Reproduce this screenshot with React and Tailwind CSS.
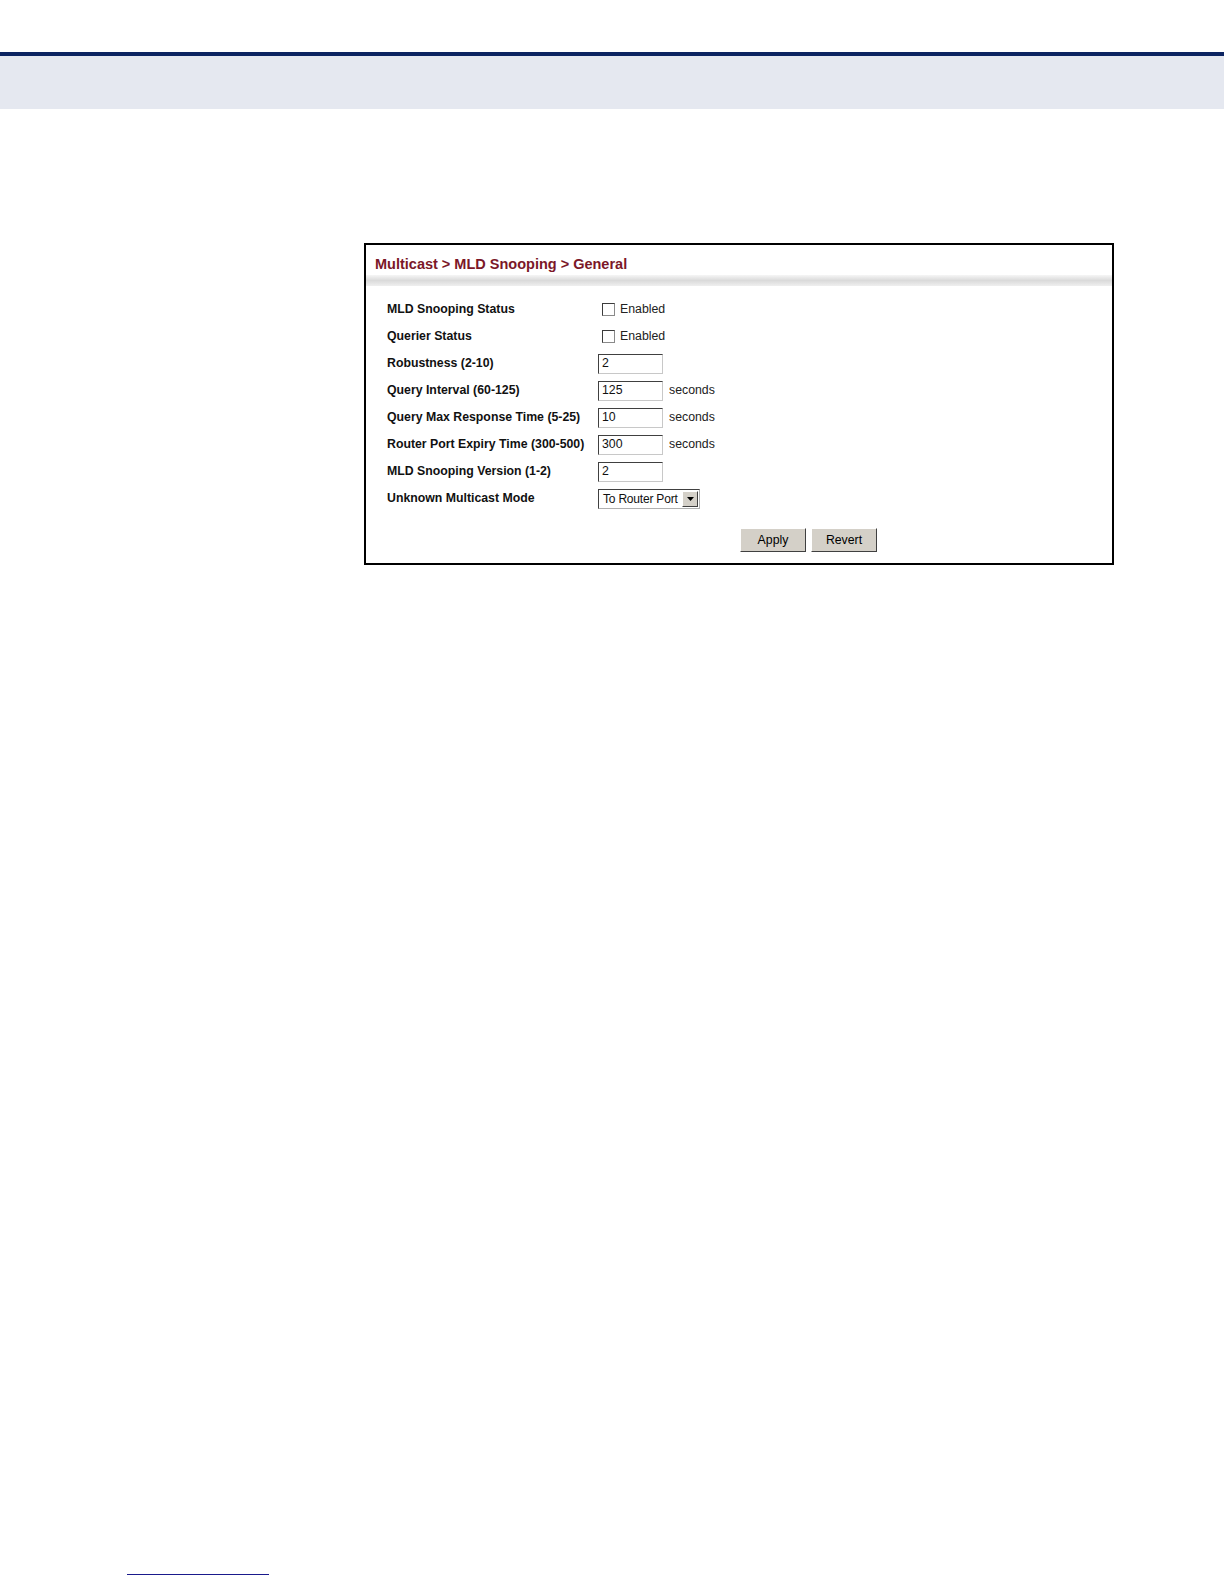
import React from 'react';

const ROWS = [
  { label: 'MLD Snooping Status', kind: 'check' },
  { label: 'Querier Status', kind: 'check' },
  { label: 'Robustness (2-10)', kind: 'input', value: '2' },
  { label: 'Query Interval (60-125)', kind: 'input', value: '125', unit: 'seconds' },
  { label: 'Query Max Response Time (5-25)', kind: 'input', value: '10', unit: 'seconds' },
  { label: 'Router Port Expiry Time (300-500)', kind: 'input', value: '300', unit: 'seconds' },
  { label: 'MLD Snooping Version (1-2)', kind: 'input', value: '2' },
  { label: 'Unknown Multicast Mode', kind: 'select', value: 'To Router Port' },
];

function Field({ row }) {
  if (row.kind === 'check') {
    return (
      <div className="flex items-center gap-[5px] pl-1">
        <span className="w-[13px] h-[13px] bg-white border border-[#8a8a8a] border-t-[#3c3c3c] border-l-[#3c3c3c]" />
        <span className="text-[12.3px] text-[#222]">Enabled</span>
      </div>
    );
  }
  if (row.kind === 'select') {
    return (
      <div className="flex items-center w-[102px] h-[20px] bg-white border border-[#b0b0b0] border-t-[#404040] border-l-[#404040]">
        <span className="flex-1 min-w-0 pl-[4px] whitespace-nowrap overflow-hidden text-[12px] tracking-[-0.2px] text-[#111] leading-none">{row.value}</span>
        <span className="w-[16px] h-[16px] shrink-0 mr-[1px] flex items-center justify-center bg-[#d4d0c8] border border-white border-r-[#404040] border-b-[#404040]">
          <svg width="7" height="4" viewBox="0 0 7 4"><path d="M0 0h7L3.5 4z" fill="#000" /></svg>
        </span>
      </div>
    );
  }
  return (
    <div className="flex items-center gap-[6px]">
      <div className="w-[65px] h-[20px] flex items-center pl-[3px] bg-white border border-[#c8c8c8] border-t-[#404040] border-l-[#404040] text-[12.3px] text-[#111]">
        {row.value}
      </div>
      {row.unit && <span className="text-[12.3px] text-[#222]">{row.unit}</span>}
    </div>
  );
}

export default function App() {
  return (
    <div className="w-[1224px] h-[1584px] bg-white flex flex-col" style={{ fontFamily: '"Liberation Sans", Arial, sans-serif' }}>
      <div className="h-[52px] shrink-0" />
      <div className="h-[4px] shrink-0 bg-[#0c2461]" />
      <div className="h-[53px] shrink-0 bg-[#e5e8f0]" />

      <div className="mt-[134px] ml-[364px] w-[750px] h-[322px] shrink-0 border-2 border-black flex flex-col">
        <div className="pt-[10px] pl-[9px] text-[14.5px] leading-[18px] font-bold text-[#7b1728]">
          Multicast &gt; MLD Snooping &gt; General
        </div>
        <div className="mt-[2px] h-[11px] bg-gradient-to-b from-[#f6f6f6] via-[#dadada] to-[#efefef]" />

        <div className="pt-[10px] pl-[21px] flex flex-col">
          {ROWS.map((row) => (
            <div key={row.label} className="h-[27px] flex items-center">
              <div className="w-[211px] text-[12.3px] font-bold text-[#111]">{row.label}</div>
              <Field row={row} />
            </div>
          ))}
        </div>

        <div className="mt-[16px] ml-[374px] flex gap-[5px]">
          <button className="w-[66px] h-[24px] bg-[#d4d0c8] border border-white border-r-[#404040] border-b-[#404040] text-[12.3px] text-black">Apply</button>
          <button className="w-[66px] h-[24px] bg-[#d4d0c8] border border-white border-r-[#404040] border-b-[#404040] text-[12.3px] text-black">Revert</button>
        </div>
      </div>

      <div className="mt-[1009px] ml-[127px] w-[142px] h-[1px] shrink-0 bg-[#1a1a8c]" />
    </div>
  );
}
